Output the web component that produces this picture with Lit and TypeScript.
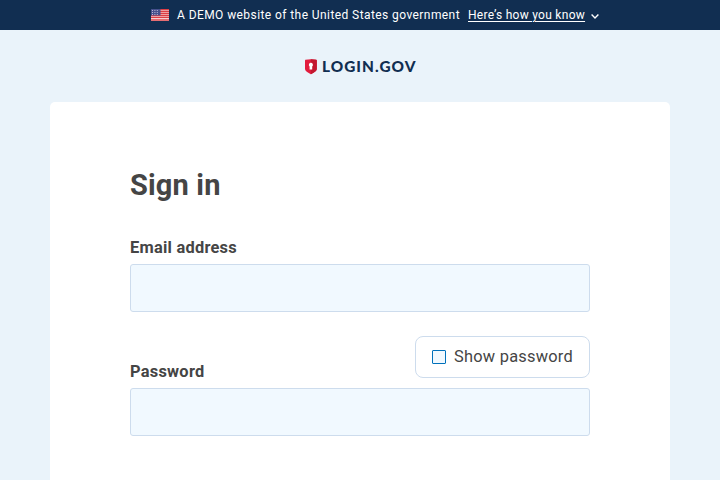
import { LitElement, html, css } from "lit";
import { customElement } from "lit/decorators.js";

const FONT = css`Roboto, "Liberation Sans", sans-serif`;

@customElement("gov-banner")
export class GovBanner extends LitElement {
  static styles = css`
    :host { display: block; background: #112e51; color: #fff; font-family: ${FONT}; }
    .inner { display: flex; height: 30px; align-items: center; padding-left: 151px; box-sizing: border-box; font-size: 12px; line-height: 18px; white-space: nowrap; }
    .flag { width: 18px; height: 12px; flex: none; margin-right: 8px; }
    .notice { width: 283px; letter-spacing: 0.42px; margin-right: 8px; }
    .link { border: 0; padding: 0; background: none; color: inherit; font: inherit; width: 117px; letter-spacing: 0.28px; text-decoration: underline; text-underline-offset: 2px; text-align: left; }
    .chevron { width: 8px; height: 5px; margin: 2px 0 0 6px; }
  `;
  render() {
    return html`<div class="inner">
      <svg class="flag" viewBox="0 0 18 12">
        <rect width="18" height="12" fill="#fff" />
        <path d="M0 .5H18M0 2.5H18M0 4.5H18M0 6.5H18M0 8.5H18M0 11H18" stroke="#dc3e44" stroke-width="1.4" />
        <rect width="9.5" height="6.5" fill="#46508c" />
        <path d="M1 1.5H8M1 3.5H8M1 5.5H8" stroke="#b9b9d6" stroke-width="1" stroke-dasharray="1 1.4" />
      </svg>
      <span class="notice">A DEMO website of the United States government</span>
      <button class="link">Here’s how you know</button>
      <svg class="chevron" viewBox="0 0 8 5"><path d="M.6.6 4 4 7.4.6" fill="none" stroke="#fff" stroke-width="1.4" /></svg>
    </div>`;
  }
}

@customElement("login-logo")
export class LoginLogo extends LitElement {
  static styles = css`
    :host { display: flex; justify-content: center; align-items: center; height: 72px; padding-top: 1px; box-sizing: border-box; }
    .logo { width: 114px; height: 20px; display: block; overflow: visible; }
    .word { font: 900 14.5px Lato, sans-serif; fill: #112e51; }
  `;
  render() {
    return html`<svg class="logo" viewBox="-1 -2 114 20">
      <path d="M1.4.8Q6.8-.2 12.2.8Q12.8 1 12.8 1.8V10Q12.8 12.4 6.9 15.2Q1 12.4 1 10V1.8Q1 1 1.4.8Z" fill="#e21c3d" />
      <path d="M6.9.3Q9.9.3 12.2.8Q12.8 1 12.8 1.8V10Q12.8 12.4 6.9 15.2Z" fill="#c2182f" />
      <path d="M6.9 3.8a2.1 2.1 0 0 1 1.3 3.7V10.6H5.6V7.5A2.1 2.1 0 0 1 6.9 3.8Z" fill="#fff" />
      <text class="word" transform="translate(18 12.8) scale(1.06 1)" textLength="88.2">LOGIN.GOV</text>
    </svg>`;
  }
}

@customElement("app-root")
export class AppRoot extends LitElement {
  static styles = css`
    :host { display: block; height: 480px; overflow: hidden; background: #eaf3fa; font-family: ${FONT}; color: #454545; }
    .card { margin: 0 50px; height: 480px; box-sizing: border-box; padding: 64px 80px; border-radius: 5px; background: #fff; }
    .title { margin: 0; font-size: 29px; line-height: 38px; font-weight: 700; letter-spacing: 0.15px; }
    .label { display: block; font-size: 16.4px; line-height: 22px; font-weight: 700; letter-spacing: 0.25px; }
    .email { margin-top: 33px; }
    .input { display: block; width: 100%; height: 48px; box-sizing: border-box; margin: 5px 0 0; padding: 8px; border: 1px solid #cddced; border-radius: 3px; background: #f1f9ff; outline: none; }
    .row { display: flex; justify-content: space-between; height: 42px; margin-top: 24px; }
    .password { margin-top: 25px; }
    .toggle { width: 175px; height: 42px; box-sizing: border-box; border: 1px solid #cddced; border-radius: 8px; display: flex; align-items: center; padding: 0 16px; font-size: 16.4px; line-height: 24px; white-space: nowrap; }
    .check { appearance: none; width: 14px; height: 14px; margin: 0 8px 0 0; border: 1px solid #0071bb; border-radius: 1px; background: #f1f9ff; }
    .show { letter-spacing: 0.24px; }
    .second { margin-top: 10px; }
  `;
  render() {
    return html`<gov-banner></gov-banner>
      <login-logo></login-logo>
      <main class="card">
        <h1 class="title">Sign in</h1>
        <label class="label email" for="email">Email address</label>
        <input class="input" id="email" type="email" />
        <div class="row">
          <label class="label password" for="password">Password</label>
          <label class="toggle"><input class="check" type="checkbox" /><span class="show">Show password</span></label>
        </div>
        <input class="input second" id="password" type="password" />
      </main>`;
  }
}
